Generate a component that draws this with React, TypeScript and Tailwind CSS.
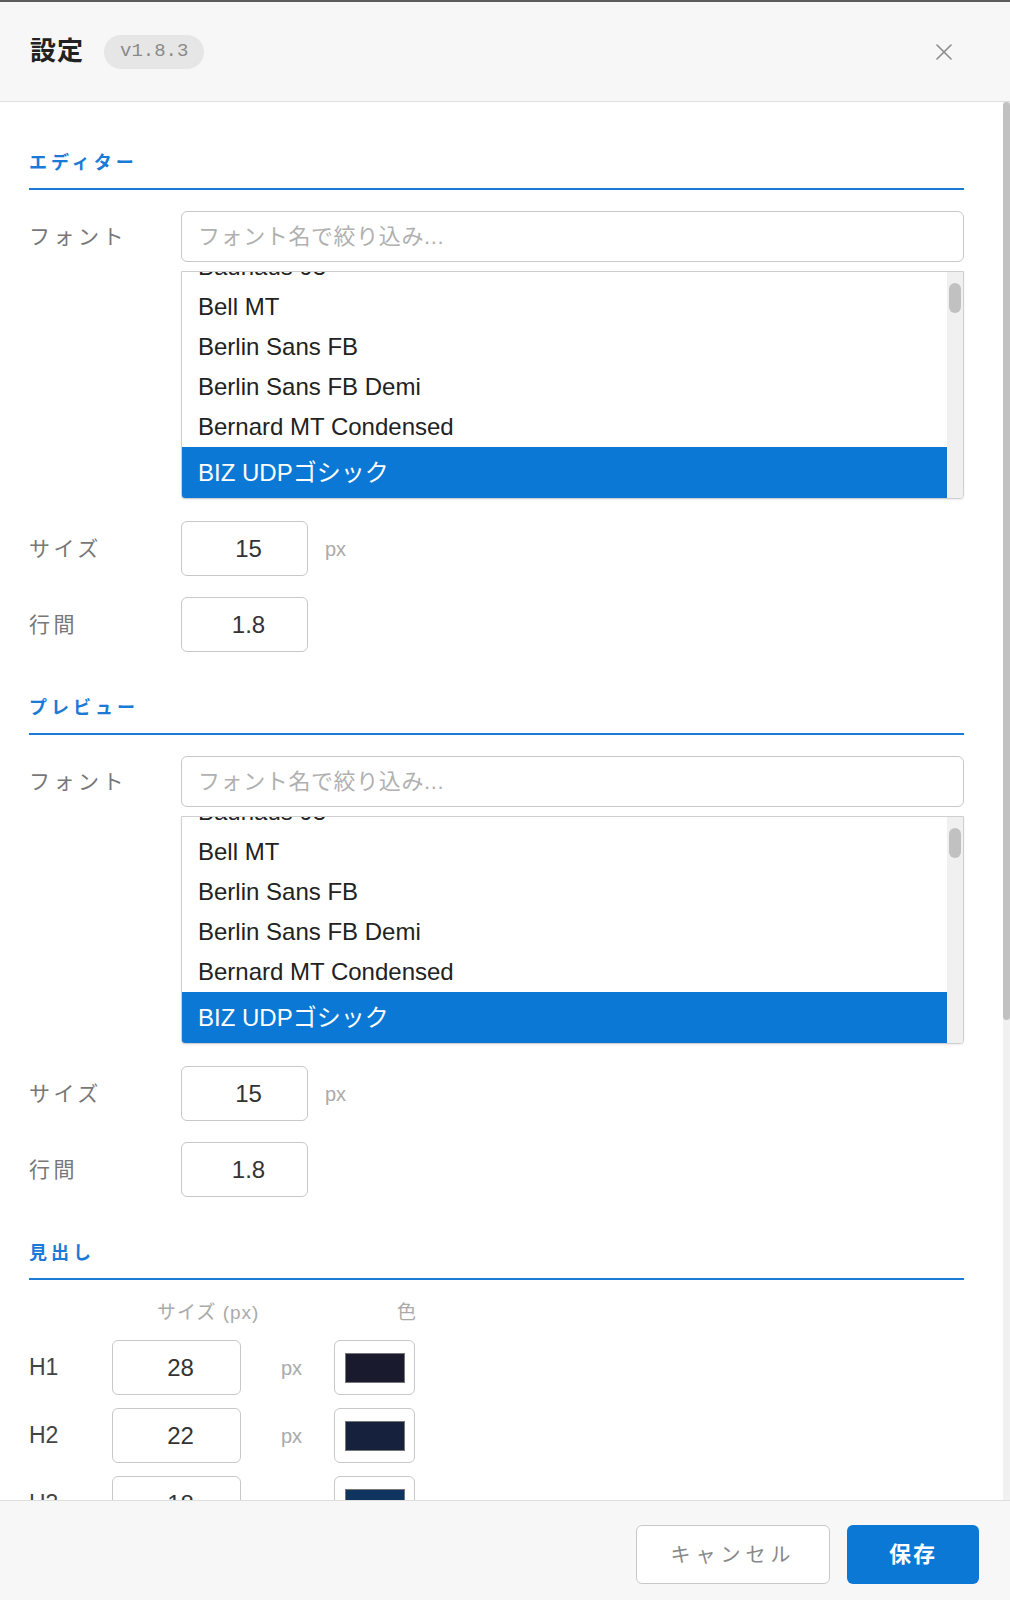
import { X } from 'lucide-react';

const fontNames = ['Bauhaus 93', 'Bell MT', 'Berlin Sans FB', 'Berlin Sans FB Demi', 'Bernard MT Condensed'];
const selectedFont = 'BIZ UDPゴシック';

const headings = [
  { tag: 'H1', size: 28, color: 'bg-[#1a1a2e]' },
  { tag: 'H2', size: 22, color: 'bg-[#16213e]' },
  { tag: 'H3', size: 18, color: 'bg-[#0f3460]' },
  { tag: 'H4', size: 16, color: 'bg-[#533483]' },
];

function SectionTitle({ title }: { title: string }) {
  return (
    <>
      <h3 className="h-[28px] text-[18px] leading-[28px] font-bold tracking-[4px] text-[#1b7ad6]">{title}</h3>
      <div className="mt-[11px] h-[2px] bg-[#1b7ad6]" />
    </>
  );
}

function FieldLabel({ text }: { text: string }) {
  return <div className="w-[152px] shrink-0 text-[21px] tracking-[3.5px] text-[#777]">{text}</div>;
}

function NumberBox({ value }: { value: string }) {
  return (
    <div className="flex h-[55px] w-[127px] items-center justify-center rounded-[6px] border border-[#c8c8c8] bg-white pl-[8px] text-[24px] text-[#333]">
      {value}
    </div>
  );
}

function FontList() {
  return (
    <div className="mt-[9px] flex h-[228px] overflow-hidden rounded-b-[4px] border border-[#cfcfcf] bg-white shadow-[0_1px_2px_rgba(0,0,0,0.08)]">
      <div className="min-w-0 flex-1 overflow-hidden">
        <div className="-mt-[25px]">
          {fontNames.map((name) => (
            <div key={name} className="flex h-[40px] items-center px-[16px] text-[24px] text-[#222]">
              {name}
            </div>
          ))}
          <div className="flex h-[51px] items-center bg-[#0a78d4] px-[16px] text-[24px] text-white">{selectedFont}</div>
        </div>
      </div>
      <div className="flex w-[16px] shrink-0 justify-center bg-[#f0f0f0] pt-[11px]">
        <div className="h-[30px] w-[12px] rounded-full bg-[#c1c1c1]" />
      </div>
    </div>
  );
}

function FontSettings() {
  return (
    <>
      <div className="mt-[21px] flex">
        <div className="flex h-[51px] items-center">
          <FieldLabel text="フォント" />
        </div>
        <div className="min-w-0 flex-1">
          <div className="flex h-[51px] items-center rounded-[6px] border border-[#c8c8c8] bg-white px-[16px] text-[22px] tracking-[0.6px] text-[#b0b0b0]">
            フォント名で絞り込み...
          </div>
          <FontList />
        </div>
      </div>
      <div className="mt-[22px] flex items-center">
        <FieldLabel text="サイズ" />
        <NumberBox value="15" />
        <span className="ml-[17px] text-[20px] text-[#aaa]">px</span>
      </div>
      <div className="mt-[21px] flex items-center">
        <FieldLabel text="行間" />
        <NumberBox value="1.8" />
      </div>
    </>
  );
}

export default function App() {
  return (
    <div className="flex h-[1600px] w-[1010px] flex-col overflow-hidden border-t-2 border-[#5c5c5c] bg-white font-['Liberation_Sans','Noto_Sans_CJK_JP',sans-serif]">
      <header className="flex h-[100px] shrink-0 items-center border-b border-[#dedede] bg-[#f7f7f7] pr-[52px] pl-[30px]">
        <h2 className="text-[26px] font-bold tracking-[1px] text-[#222]">設定</h2>
        <span className="ml-[20px] flex h-[34px] items-center rounded-full bg-[#e6e6e6] px-[16px] font-['Liberation_Mono',monospace] text-[19px] text-[#8a8a8a]">
          v1.8.3
        </span>
        <button className="ml-auto text-[#8c8c8c]">
          <X size={28} strokeWidth={1.4} />
        </button>
      </header>

      <div className="flex min-h-0 flex-1">
        <div className="min-w-0 flex-1 overflow-hidden pr-[39px] pl-[29px]">
          <section className="pt-[47px]">
            <SectionTitle title="エディター" />
            <FontSettings />
          </section>

          <section className="pt-[42px]">
            <SectionTitle title="プレビュー" />
            <FontSettings />
          </section>

          <section className="pt-[42px]">
            <SectionTitle title="見出し" />
            <div className="mt-[20px] flex h-[26px] items-center text-[19px] tracking-[1px] text-[#aaa]">
              <span className="ml-[128px] w-[240px]">サイズ (px)</span>
              <span>色</span>
            </div>
            <div className="mt-[14px] flex flex-col gap-[13px]">
              {headings.map((h) => (
                <div key={h.tag} className="flex items-center">
                  <div className="w-[83px] shrink-0 text-[23px] text-[#444]">{h.tag}</div>
                  <div className="flex h-[55px] w-[129px] items-center justify-center rounded-[6px] border border-[#c8c8c8] bg-white pl-[8px] text-[24px] text-[#333]">
                    {h.size}
                  </div>
                  <span className="ml-[40px] w-[30px] text-[20px] text-[#aaa]">px</span>
                  <div className="ml-[23px] flex h-[55px] w-[81px] items-center justify-center rounded-[6px] border border-[#c8c8c8] bg-white">
                    <div className={`h-[30px] w-[60px] border border-[#777] ${h.color}`} />
                  </div>
                </div>
              ))}
            </div>
          </section>
        </div>

        <div className="flex w-[7px] shrink-0 flex-col bg-[#f1f1f1]">
          <div className="h-[918px] rounded-full bg-[#c1c1c1]" />
        </div>
      </div>

      <footer className="flex h-[100px] shrink-0 items-start justify-end gap-[17px] border-t border-[#dedede] bg-[#f7f7f7] pt-[24px] pr-[31px]">
        <button className="h-[59px] w-[194px] rounded-[6px] border border-[#c8c8c8] bg-white text-[20px] tracking-[5px] text-[#888]">
          キャンセル
        </button>
        <button className="h-[59px] w-[132px] rounded-[6px] bg-[#0a78d4] text-[22px] font-bold tracking-[2px] text-white">
          保存
        </button>
      </footer>
    </div>
  );
}
